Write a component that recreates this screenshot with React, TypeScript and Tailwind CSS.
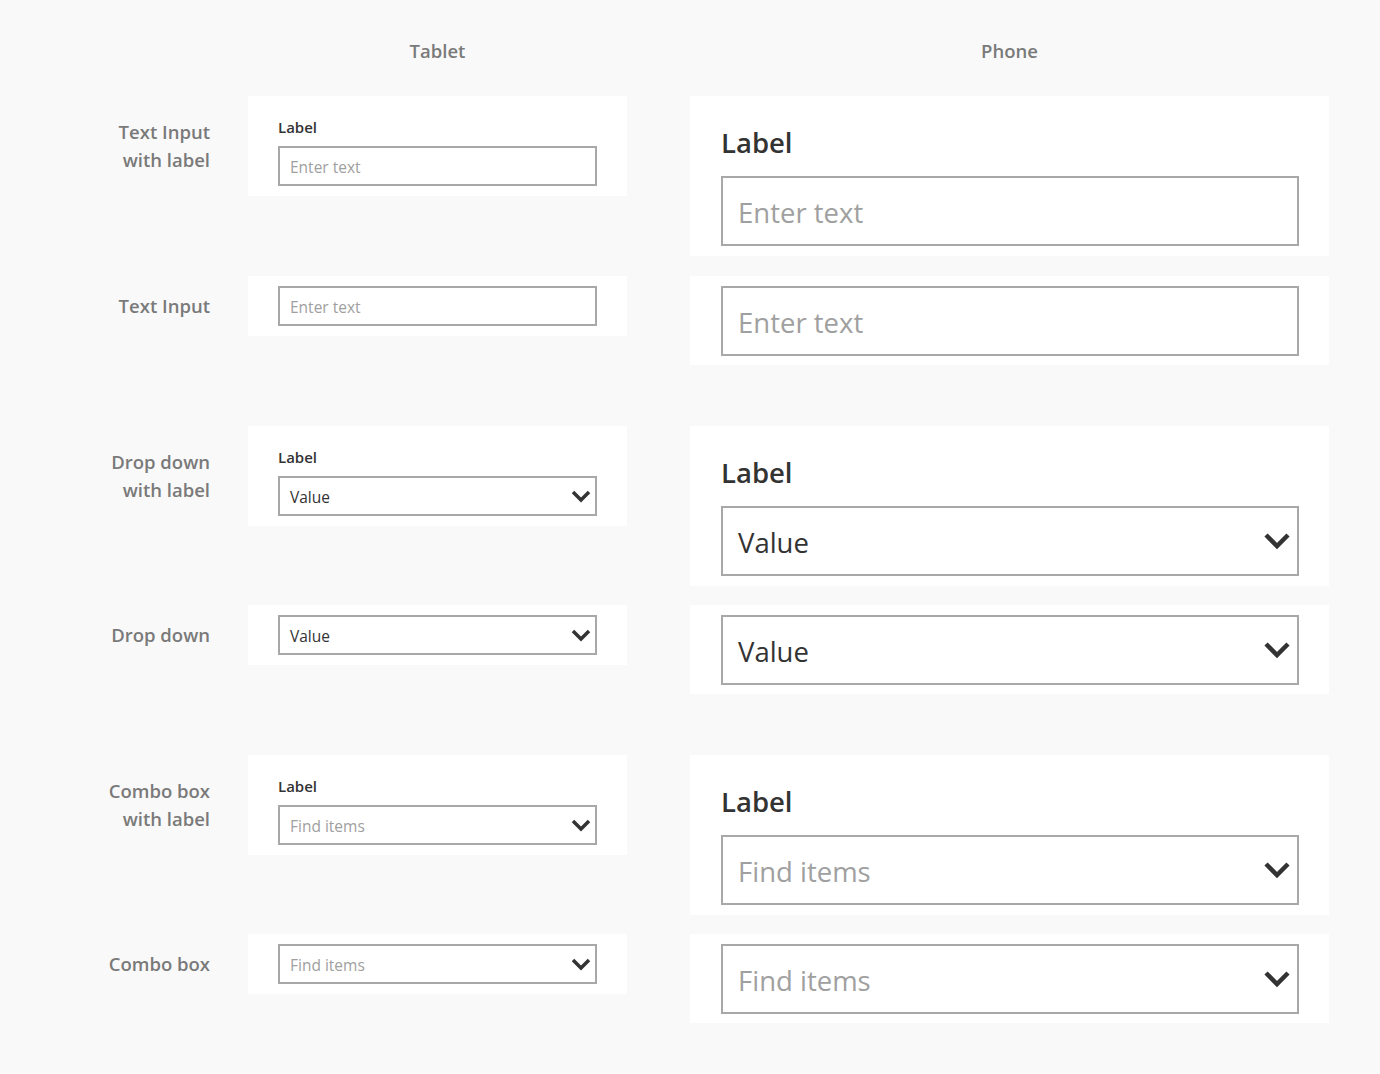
import React from "react";

const font = { fontFamily: '"Open Sans", "Noto Sans", sans-serif' };

function Chevron({ big }: { big?: boolean }) {
  if (big) {
    return (
      <svg width="28" height="20" viewBox="0 0 28 20" className="shrink-0">
        <polyline points="3,4 14,15 25,4" fill="none" stroke="#333333" strokeWidth="4.5" strokeLinecap="butt" strokeLinejoin="miter" />
      </svg>
    );
  }
  return (
    <svg width="22" height="14" viewBox="0 0 22 14" className="shrink-0">
      <polyline points="3,3 11,11 19,3" fill="none" stroke="#333333" strokeWidth="3.5" strokeLinecap="butt" strokeLinejoin="miter" />
    </svg>
  );
}

type Kind = "text" | "drop" | "combo";

function TabletField({ kind }: { kind: Kind }) {
  const txt = kind === "text" ? "Enter text" : kind === "drop" ? "Value" : "Find items";
  const isPh = kind !== "drop";
  return (
    <div className="h-[40px] w-[319px] border-2 border-[#a8a8a8] bg-white flex items-center pl-[10px] pr-[3px]">
      <span className={`flex-1 pt-[3px] text-[15.5px] leading-none ${isPh ? "text-[#a0a0a0]" : "text-[#333333]"}`}>{txt}</span>
      {kind !== "text" && <Chevron />}
    </div>
  );
}

function PhoneField({ kind }: { kind: Kind }) {
  const txt = kind === "text" ? "Enter text" : kind === "drop" ? "Value" : "Find items";
  const isPh = kind !== "drop";
  return (
    <div className="h-[70px] w-[578px] border-2 border-[#a8a8a8] bg-white flex items-center pl-[15px] pr-[6px]">
      <span className={`flex-1 pt-[4px] text-[27.5px] leading-none ${isPh ? "text-[#a0a0a0]" : "text-[#333333]"}`}>{txt}</span>
      {kind !== "text" && <Chevron big />}
    </div>
  );
}

function RowLabel({ lines, h }: { lines: string[]; h: number }) {
  return (
    <div
      className="w-[210px] shrink-0 flex flex-col items-end justify-center text-right text-[18.5px] leading-[28px] text-[#7a7a7a] font-semibold"
      style={{ height: h }}
    >
      {lines.map((l) => (
        <div key={l}>{l}</div>
      ))}
    </div>
  );
}

function Row({ kind, labeled, lines }: { kind: Kind; labeled: boolean; lines: string[] }) {
  return (
    <div className="flex items-start">
      <RowLabel lines={lines} h={labeled ? 100 : 60} />
      <div className="ml-[38px] w-[379px] bg-white shrink-0">
        {labeled ? (
          <div className="pl-[30px] pt-[21px] pb-[10px]">
            <div className="text-[15px] leading-[20px] font-semibold text-[#333333] mb-[9px]">Label</div>
            <TabletField kind={kind} />
          </div>
        ) : (
          <div className="pl-[30px] py-[10px]">
            <TabletField kind={kind} />
          </div>
        )}
      </div>
      <div className="ml-[63px] w-[639px] bg-white shrink-0">
        {labeled ? (
          <div className="pl-[31px] pt-[29px] pb-[10px]">
            <div className="text-[27.5px] leading-[36px] font-semibold text-[#333333] mb-[15px]">Label</div>
            <PhoneField kind={kind} />
          </div>
        ) : (
          <div className="pl-[31px] pt-[10px] pb-[9px]">
            <PhoneField kind={kind} />
          </div>
        )}
      </div>
    </div>
  );
}

function Group({ kind, a, b, first }: { kind: Kind; a: string[]; b: string[]; first?: boolean }) {
  return (
    <div className={`flex flex-col ${first ? "gap-[20px]" : "gap-[19px]"}`}>
      <Row kind={kind} labeled lines={a} />
      <Row kind={kind} labeled={false} lines={b} />
    </div>
  );
}

export default function App() {
  return (
    <div className="min-h-[1074px] w-[1380px] bg-[#f9f9f9]" style={font}>
      <div className="pt-[38px] flex text-[18.5px] leading-[26px] text-[#7a7a7a] font-semibold">
        <div className="w-[248px] shrink-0" />
        <div className="w-[379px] text-center shrink-0">Tablet</div>
        <div className="ml-[63px] w-[639px] text-center shrink-0">Phone</div>
      </div>
      <div className="mt-[32px] flex flex-col gap-[61px] pb-[50px]">
        <Group first kind="text" a={["Text Input", "with label"]} b={["Text Input"]} />
        <Group kind="drop" a={["Drop down", "with label"]} b={["Drop down"]} />
        <Group kind="combo" a={["Combo box", "with label"]} b={["Combo box"]} />
      </div>
    </div>
  );
}
